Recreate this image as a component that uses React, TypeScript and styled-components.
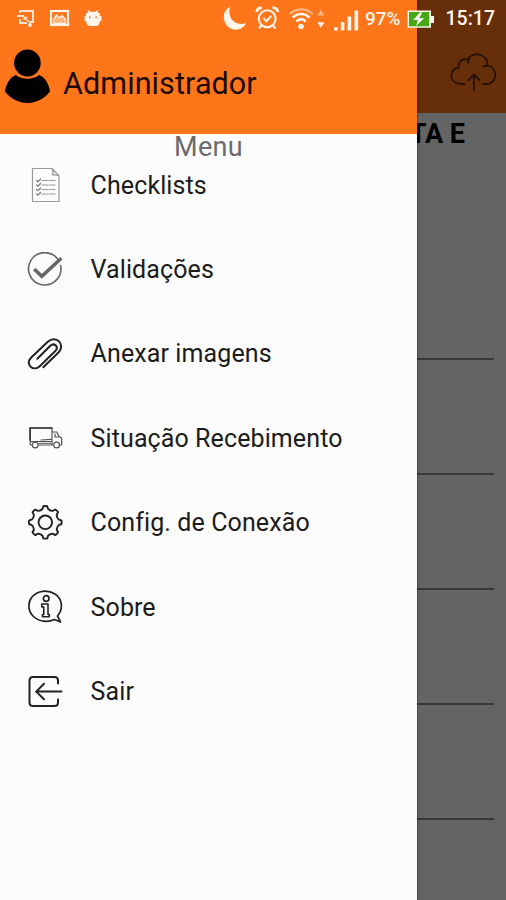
import React from "react";
import styled, { createGlobalStyle } from "styled-components";

const orange = "#ff751a";
const paper = "#fbfbfb";

const GlobalStyle = createGlobalStyle`
  body { margin: 0; font-family: Roboto, "Liberation Sans", sans-serif; }
  svg { display: block; flex: none; }
`;

const Screen = styled.div`
  position: relative;
  width: 506px;
  height: 900px;
  overflow: hidden;
  background: ${paper};
`;

const Page = styled.div`
  display: flex;
  flex-direction: column;
  height: 100%;
`;

const AppBar = styled.header`
  box-sizing: border-box;
  height: 113px;
  padding: 53px 9px 0 0;
  display: flex;
  justify-content: flex-end;
  background: ${orange};
`;

const PageTitle = styled.h1`
  margin: 0;
  padding-right: 41px;
  height: 42px;
  line-height: 43px;
  text-align: right;
  font-size: 27px;
  font-weight: 700;
  color: #000;
`;

const Form = styled.div`
  display: flex;
  flex-direction: column;
  padding: 90px 12px 0 0;
`;

const Field = styled.div`
  box-sizing: border-box;
  height: 115px;
  border-bottom: 2px solid #8c8c8c;
`;

const Scrim = styled.div`
  position: absolute;
  inset: 0;
  background: rgba(0, 0, 0, 0.6);
`;

const Drawer = styled.aside`
  position: absolute;
  inset: 0 auto 0 0;
  width: 417px;
  background: ${paper};
  box-shadow: 0 0 2px rgba(0, 0, 0, 0.75);
`;

const Account = styled.div`
  box-sizing: border-box;
  height: 134px;
  padding: 48px 0 0 4px;
  display: flex;
  align-items: flex-start;
  gap: 11px;
  background: ${orange};
`;

const AccountName = styled.div`
  margin-top: 18px;
  line-height: 36px;
  font-size: 30.5px;
  letter-spacing: 0.1px;
  color: #1a0b02;
`;

const MenuHeading = styled.div`
  height: 9px;
  line-height: 26px;
  text-align: center;
  font-size: 27px;
  letter-spacing: 0.3px;
  color: #6b6b6b;
`;

const MenuList = styled.nav`
  display: flex;
  flex-direction: column;
`;

const MenuItem = styled.div`
  height: 84.4px;
  padding-left: 27px;
  display: flex;
  align-items: center;
  gap: 27.6px;
  font-size: 25px;
  letter-spacing: 0.1px;
  color: #1c1c1c;
  white-space: nowrap;
`;

const StatusBar = styled.div`
  position: absolute;
  inset: 0 0 auto 0;
  height: 37px;
  box-sizing: border-box;
  padding: 0 11px 0 16px;
  display: flex;
  align-items: center;
  color: #fff4ea;
`;

const Notifications = styled.div`
  display: flex;
  gap: 14px;
  margin: -2px auto 0 0;
`;

const StatusText = styled.span<{ $size: number; $left: number; $right?: number }>`
  font-size: ${(p) => p.$size}px;
  font-weight: 500;
  line-height: 37px;
  margin-left: ${(p) => p.$left}px;
  margin-right: ${(p) => p.$right ?? 0}px;
`;

const LineIcon = ({ color = "#222", width = 1.7, children }: { color?: string; width?: number; children: React.ReactNode }) => (
  <svg width="36" height="36" viewBox="0 0 36 36" fill="none" stroke={color} strokeWidth={width} strokeLinecap="round" strokeLinejoin="round">
    {children}
  </svg>
);

const ChecklistIcon = () => (
  <LineIcon color="#9a9a9a" width={1.2}>
    <path d="M5.5 1.5H25L32 9V34.5H5.5Z" />
    <path d="M25 1.5C26.5 4 26.5 6 25.5 8C28 7.5 30 7.8 32 9" />
    <path d="M15 13.5H28M15 18H28M15 22.5H28M15 27H28" strokeDasharray="6 1.2" />
    <path d="M9.5 13.5L11 14.7L13.5 12M9.5 18L11 19.2L13.5 16.5M9.5 22.5L11 23.7L13.5 21M9.5 27L11 28.2L13.5 25.5" stroke="#777" />
  </LineIcon>
);

const CheckIcon = () => (
  <LineIcon color="#666" width={1.6}>
    <path d="M31.2 7.8A16.2 16.2 0 1 0 33.6 13.5" />
    <path d="M7.2 17L14.8 24.3L34.3 6.3" strokeWidth="3.5" strokeLinecap="butt" strokeLinejoin="miter" />
  </LineIcon>
);

const ClipIcon = () => (
  <LineIcon width={2}>
    <path d="M16.3 31.3L31.5 16.5C39 8.5 29 -1.7 20.8 5.8L4 21.7C-2.4 28.4 6.5 36.3 13 30L28.3 15C32.3 10.8 27.2 6.3 23.3 9.8L10.3 22.8" />
  </LineIcon>
);

const TruckIcon = () => (
  <LineIcon color="#555" width={1.2}>
    <path d="M3.3 8H25V25H12M5 25H3.3V19.5M3.3 8V21.5H24M25 12H29.8L32 16.5L34.7 18V25H33M26 25H25M28 14V17H32M14 20L24 19.3" />
    <path d="M3 8H25M3 8V20" stroke="#333" strokeWidth="1.5" />
    <path d="M12 23.3H24" stroke="#777" />
    <circle cx="8.2" cy="25" r="2.9" />
    <circle cx="29.6" cy="25" r="2.9" />
  </LineIcon>
);

const gearPath = (() => {
  const at = (r: number, deg: number) => {
    const a = ((deg - 90) * Math.PI) / 180;
    return `${(18.3 + r * Math.cos(a)).toFixed(2)} ${(17.3 + r * Math.sin(a)).toFixed(2)}`;
  };
  let d = `M${at(16.2, -7)}`;
  for (let i = 0; i < 8; i++) {
    const t = i * 45;
    d += `Q${at(16.6, t)} ${at(16.2, t + 7)}L${at(13.9, t + 11)}Q${at(12, t + 22.5)} ${at(13.9, t + 34)}L${at(16.2, t + 38)}`;
  }
  return d + "Z";
})();

const GearIcon = () => (
  <LineIcon width={1.9}>
    <path d={gearPath} />
    <circle cx="18.3" cy="17.3" r="6.8" />
  </LineIcon>
);

const InfoIcon = () => (
  <LineIcon width={1.7}>
    <path d="M30.5 27C37 19 34.8 9.5 28 5C20.5 .5 10.5 1.5 5 8C.2 14 1.2 22.5 6.5 27.5C12.5 33 21 33.5 27.5 30.5L33.5 33L30.5 27Z" />
    <circle cx="19.2" cy="9.5" r="2.8" strokeWidth="1.7" />
    <path d="M14.8 15H21V25.5H22.3V27.8H15.5V25.5H16.8V18H14.8Z" strokeWidth="1.6" />
  </LineIcon>
);

const ExitIcon = () => (
  <LineIcon width={2}>
    <path d="M31 9.5V6.5Q31 3 27.5 3H6Q2.5 3 2.5 6.5V28.5Q2.5 32 6 32H27.5Q31 32 31 28.5V25.5" />
    <path d="M34.5 17.6H9.5M17 9.8L9.2 17.6L17 25.2" />
  </LineIcon>
);

const UserIcon = () => (
  <svg width="48" height="58" viewBox="0 0 48 58" fill="#000">
    <ellipse cx="23.4" cy="15" rx="13.3" ry="13.4" />
    <path d="M12 27C18 32 29 32 35 27C41 29 45 36 46 43.5C40 51 32 55 23.4 55S7 51 1 43.5C2 36 6 29 12 27Z" />
  </svg>
);

const CloudIcon = () => (
  <svg width="48" height="40" viewBox="0 0 48 40" fill="none" stroke="#5a2b0c" strokeWidth="1.8" strokeLinecap="round" strokeLinejoin="round">
    <path d="M15.5 31H12C-1 30 0 15.5 9.5 14.5C9.5 7.5 14 5.5 18.5 6.5C24-1.5 38-.5 38.8 12.5C50 16 48 31 37.5 31H34" />
    <path d="M19 10C19.3 8 19.6 6.8 20.5 5.6M38.8 13C37 12.5 36 12.7 34.5 13.4" />
    <path d="M25 37.5V22M19.5 27L25 21.5L30.5 27" />
  </svg>
);

const CastIcon = () => (
  <svg width="20" height="20" viewBox="0 0 20 20" fill="none" stroke="#ffe5d2" strokeWidth="2">
    <path d="M4 5V3H17V14H14M1 8H8M4 11V15H11" />
    <path d="M8 9.5L14 14.5M8 12V9.5H11" strokeWidth="1.5" />
    <circle cx="14" cy="17" r="2" fill="#ffe5d2" stroke="none" />
  </svg>
);

const PhotoIcon = () => (
  <svg width="20" height="20" viewBox="0 0 20 20">
    <rect x="1" y="3" width="17" height="14" fill="none" stroke="#fff4ea" strokeWidth="2.2" />
    <path d="M3.5 15.5V11.5L6.5 7L9.5 10L12 7.5L15.5 11.5V15.5Z" fill="#ffb27a" stroke="#fff4ea" strokeWidth="1.4" />
  </svg>
);

const AndroidIcon = () => (
  <svg width="20" height="20" viewBox="0 0 20 20">
    <path d="M2 6Q2 4.7 4.5 4.2L3.5 1.5L6.5 3.7H11.5L14.5 1.5L13.5 4.2Q16 4.7 16 6V8H17.5V13H16Q15.5 18 12 18H6Q2.5 18 2 13H.5V8H2Z" fill="#fff4ea" />
    <circle cx="5.8" cy="9.3" r="1" fill="#cf9165" />
    <circle cx="12.2" cy="9.3" r="1" fill="#cf9165" />
  </svg>
);

/* Moon, alarm, wifi, data arrows and signal strength, drawn as one strip. */
const SignalStrip = () => (
  <svg width="138" height="28" viewBox="220 4.5 138 28" fill="none" stroke="#fff4ea">
    <path d="M229.3 6.3C225.5 17 234 26.5 245.3 22.5C241 31 229 31.5 224.5 23C220.8 15.5 223.5 9 229.3 6.3Z" fill="#fff4ea" stroke="none" />
    <circle cx="266.2" cy="18.2" r="8.4" strokeWidth="2.1" />
    <path d="M262.3 17.5L265.4 20.7L270.2 15.5M260.5 25L258 28.2M272 25L274.5 28.2" strokeWidth="2.1" />
    <path d="M255.8 11.5C255.8 8.5 258 7 261 7.4M271.5 7.4C274.5 7 276.7 8.5 276.7 11.5" strokeWidth="2.8" />
    <path d="M288.5 13.8C295 7.2 305.5 7.2 311.5 13.8" stroke="#ffb781" strokeWidth="2.2" />
    <path d="M291.7 17.2C296.5 12.2 303.7 12.2 308.5 17.2M295.4 21C298.5 18 301.8 18 304.8 21" strokeWidth="2.5" />
    <circle cx="300" cy="26" r="2.7" fill="#fff4ea" stroke="none" />
    <path d="M319.8 9.2L323.3 15H316.3Z" fill="#ffb781" stroke="none" />
    <path d="M319.8 27.3L316.2 21.8H323.4Z" fill="#fff4ea" stroke="none" />
    <path d="M334.8 26.8V30M341.6 21.5V30M348.4 16V30M355.3 10V30" strokeWidth="3.6" />
  </svg>
);

const BatteryIcon = () => (
  <svg width="29" height="20" viewBox="406 8 29 20">
    <path d="M407.5 9.5H431V15H434V22H431V26.7H407.5Z" fill="#f5f9ed" />
    <rect x="409" y="11" width="20.2" height="14.3" fill="#45a814" />
    <path d="M420 11.5L413.2 19H418L416 25L424 17.2H419L422.3 11.5Z" fill="#fff" />
  </svg>
);

const menu = [
  { label: "Checklists", Icon: ChecklistIcon },
  { label: "Validações", Icon: CheckIcon },
  { label: "Anexar imagens", Icon: ClipIcon },
  { label: "Situação Recebimento", Icon: TruckIcon },
  { label: "Config. de Conexão", Icon: GearIcon },
  { label: "Sobre", Icon: InfoIcon },
  { label: "Sair", Icon: ExitIcon },
];

export default function App() {
  return (
    <Screen>
      <GlobalStyle />
      <Page>
        <AppBar>
          <CloudIcon />
        </AppBar>
        <PageTitle>TA E</PageTitle>
        <Form>
          {[0, 1, 2, 3, 4].map((n) => (
            <Field key={n} />
          ))}
        </Form>
      </Page>
      <Scrim />
      <Drawer>
        <Account>
          <UserIcon />
          <AccountName>Administrador</AccountName>
        </Account>
        <MenuHeading>Menu</MenuHeading>
        <MenuList>
          {menu.map(({ label, Icon }) => (
            <MenuItem key={label}>
              <Icon />
              <span>{label}</span>
            </MenuItem>
          ))}
        </MenuList>
      </Drawer>
      <StatusBar>
        <Notifications>
          <CastIcon />
          <PhotoIcon />
          <AndroidIcon />
        </Notifications>
        <SignalStrip />
        <StatusText $size={19} $left={6} $right={5}>97%</StatusText>
        <BatteryIcon />
        <StatusText $size={19.5} $left={11}>15:17</StatusText>
      </StatusBar>
    </Screen>
  );
}
